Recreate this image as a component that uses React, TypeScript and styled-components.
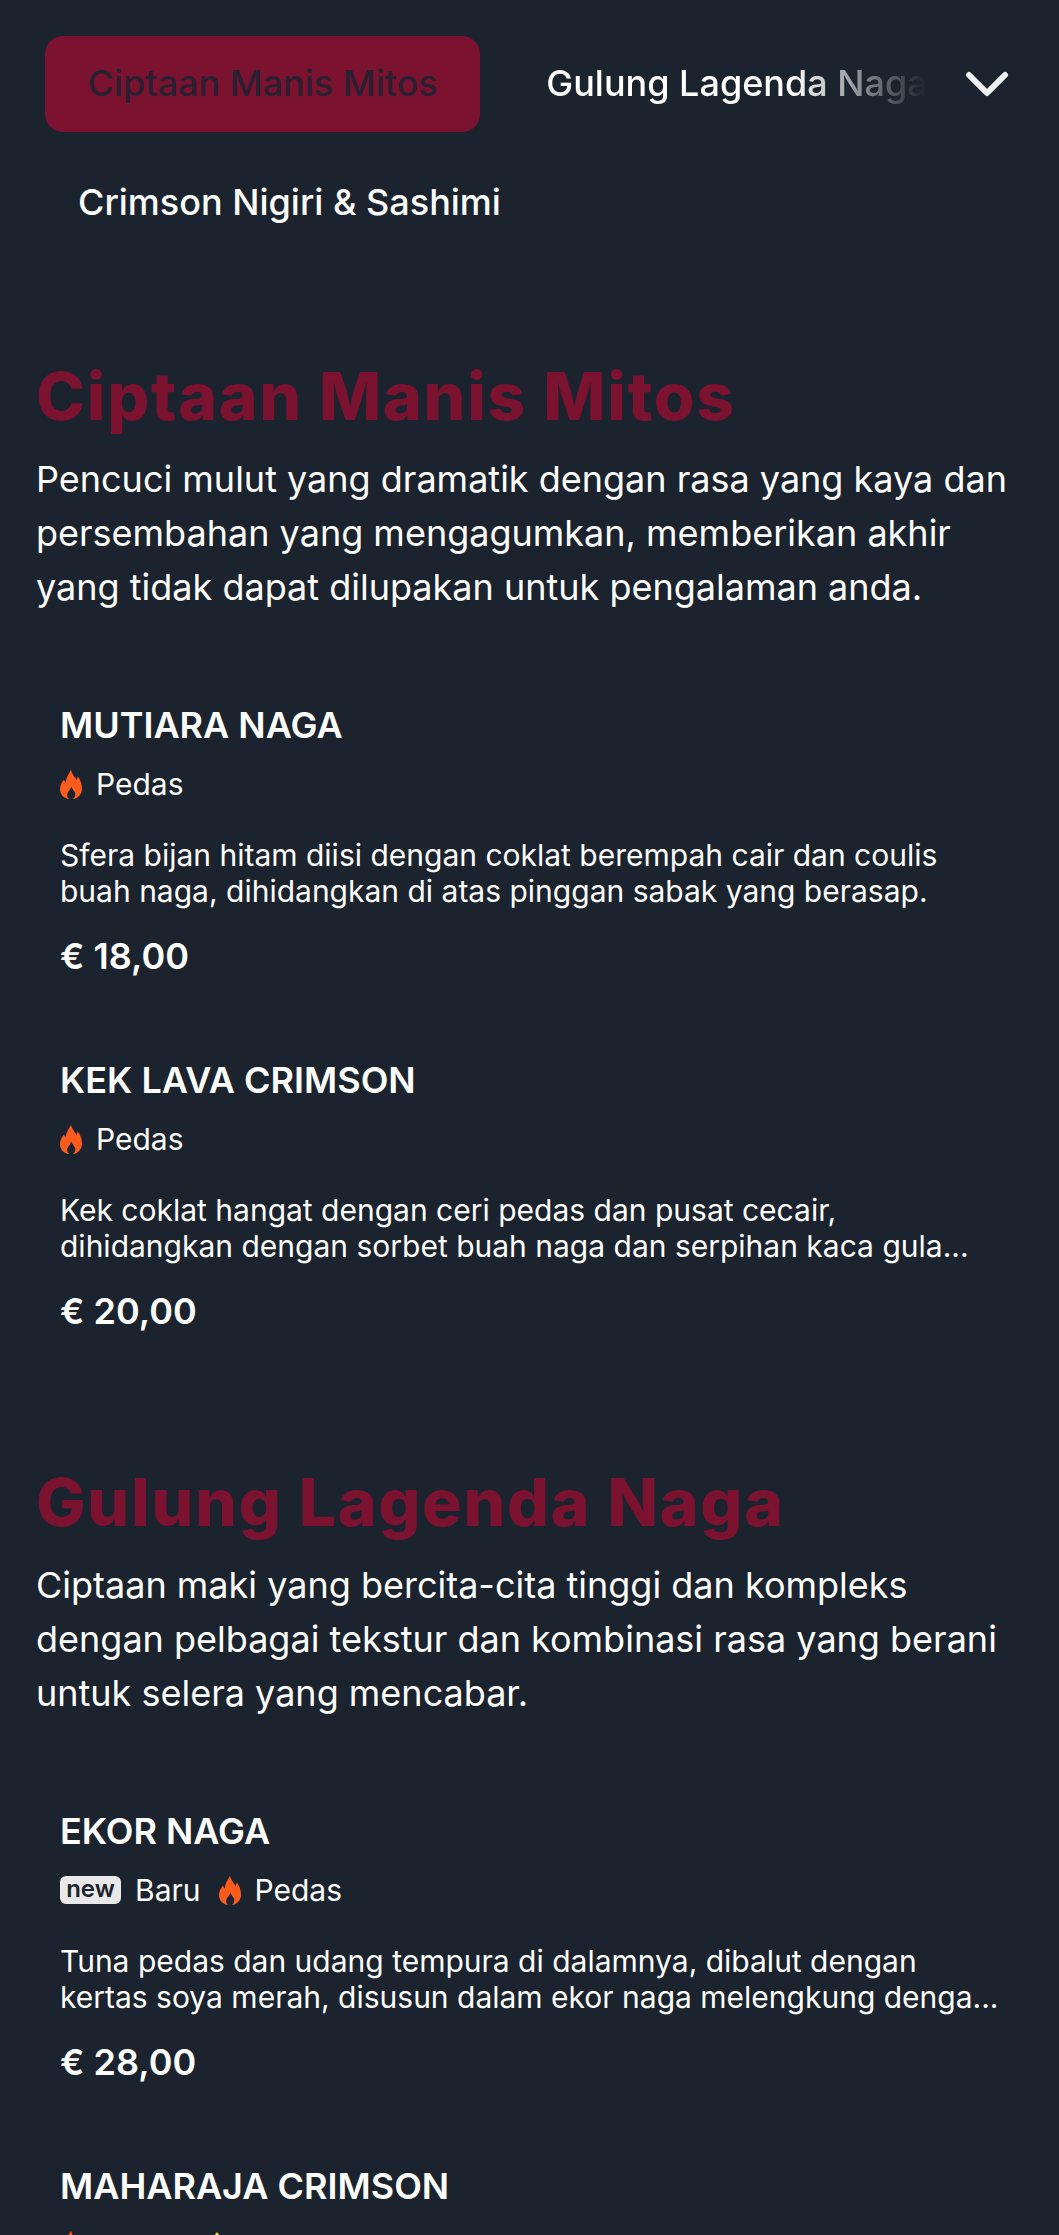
import React from "react";
import styled, { createGlobalStyle } from "styled-components";
import { FaStar } from "react-icons/fa";

const Global = createGlobalStyle`
  html, body { margin: 0; padding: 0; background: #1b232e; }
  body { font-family: Inter, "Liberation Sans", sans-serif; color: #fff; }
`;

const Page = styled.div`
  width: 1059px;
  height: 2235px;
  overflow: hidden;
  background: #1b232e;
`;

const Tabs = styled.nav`
  display: flex;
  align-items: flex-start;
  padding: 36px 50px 0 45px;
  height: 228px;
  box-sizing: border-box;
`;

const TabWrap = styled.div`
  flex: 1;
  display: flex;
  flex-wrap: wrap;
  row-gap: 23px;
  overflow: hidden;
`;

const Tab = styled.button<{ $active?: boolean; $shift?: number }>`
  height: 96px;
  padding: 0 ${(p) => (p.$active ? 42.5 : 0)}px 2px;
  margin-left: ${(p) => p.$shift ?? 0}px;
  border: none;
  border-radius: 18px;
  background: ${(p) => (p.$active ? "#7b1230" : "transparent")};
  color: ${(p) => (p.$active ? "#2a2030" : "#fff")};
  font: 500 36px Inter, sans-serif;
  white-space: nowrap;
`;

const FadeTab = styled.span`
  display: block;
  width: 380px;
  overflow: hidden;
  white-space: nowrap;
  -webkit-mask-image: linear-gradient(90deg, #000 65%, transparent 100%);
  mask-image: linear-gradient(90deg, #000 65%, transparent 100%);
`;

const Chevron = styled.svg`
  width: 44px;
  height: 26px;
  margin-top: 35px;
  flex: none;
  fill: none;
  stroke: #f1f3f5;
  stroke-width: 6;
  stroke-linecap: round;
  stroke-linejoin: round;
`;

const Section = styled.section`
  display: flex;
  flex-direction: column;
  padding: 0 36px;
`;

const Title = styled.h2`
  margin: 128px 0 0;
  font: 800 66px/80px Inter, sans-serif;
  letter-spacing: 1.7px;
  color: #7b1230;
`;

const Lead = styled.p`
  margin: 16px 0 10px;
  font: 400 36px/54px Inter, sans-serif;
`;

const Item = styled.article`
  padding: 0 24px;
  margin-top: 78px;
`;

const Name = styled.h3`
  margin: 0;
  font: 600 36px/46px Inter, sans-serif;
`;

const Tags = styled.div`
  display: flex;
  align-items: center;
  height: 36px;
  margin-top: 18px;
  font: 400 30px/36px Inter, sans-serif;
`;

const Tag = styled.span`
  display: flex;
  align-items: center;
  margin-right: 18px;
`;

const IconGap = styled.span`
  width: 89px;
  margin-right: 18px;
`;

const FlameSvg = styled.svg`
  width: 22px;
  height: 29px;
  fill: #ff5c1c;
  margin-right: 14px;
`;

const Star = styled(FaStar)`
  width: 28px;
  height: 28px;
  color: #e6d23c;
`;

const NewBadge = styled.span`
  width: 61px;
  height: 28px;
  margin-right: 14px;
  border-radius: 6px;
  background: #e9e9e9;
  color: #1b232e;
  font: 600 24px/26px Inter, sans-serif;
  text-align: center;
`;

const Desc = styled.p`
  margin: 35px 0 0;
  font: 400 30px/36px Inter, sans-serif;
`;

const Price = styled.div`
  margin-top: 24px;
  font: 600 36px/46px Inter, sans-serif;
`;

const Flame = () => (
  <FlameSvg viewBox="0 0 220 290">
    <path d="M110 0C118 40 150 70 165 100C172 85 176 75 178 62C205 100 220 140 220 185C220 245 178 285 130 290C150 270 158 250 150 225C140 205 125 195 112 165C105 195 85 210 75 230C65 255 75 275 90 290C40 285 0 245 0 190C0 150 20 120 40 95C45 110 50 118 58 125C60 75 85 40 110 0Z" />
  </FlameSvg>
);

type T = { name: string; isNew?: boolean; clipped?: boolean; desc: string[]; price: string };

const sections: { title: string; lead: string[]; items: T[] }[] = [
  {
    title: "Ciptaan Manis Mitos",
    lead: [
      "Pencuci mulut yang dramatik dengan rasa yang kaya dan",
      "persembahan yang mengagumkan, memberikan akhir",
      "yang tidak dapat dilupakan untuk pengalaman anda.",
    ],
    items: [
      {
        name: "MUTIARA NAGA",
        desc: [
          "Sfera bijan hitam diisi dengan coklat berempah cair dan coulis",
          "buah naga, dihidangkan di atas pinggan sabak yang berasap.",
        ],
        price: "€ 18,00",
      },
      {
        name: "KEK LAVA CRIMSON",
        desc: [
          "Kek coklat hangat dengan ceri pedas dan pusat cecair,",
          "dihidangkan dengan sorbet buah naga dan serpihan kaca gula...",
        ],
        price: "€ 20,00",
      },
    ],
  },
  {
    title: "Gulung Lagenda Naga",
    lead: [
      "Ciptaan maki yang bercita-cita tinggi dan kompleks",
      "dengan pelbagai tekstur dan kombinasi rasa yang berani",
      "untuk selera yang mencabar.",
    ],
    items: [
      {
        name: "EKOR NAGA",
        isNew: true,
        desc: [
          "Tuna pedas dan udang tempura di dalamnya, dibalut dengan",
          "kertas soya merah, disusun dalam ekor naga melengkung denga...",
        ],
        price: "€ 28,00",
      },
      { name: "MAHARAJA CRIMSON", clipped: true, desc: [], price: "" },
    ],
  },
];

export default function App() {
  return (
    <Page>
      <Global />
      <Tabs>
        <TabWrap>
          <Tab $active>Ciptaan Manis Mitos</Tab>
          <Tab $shift={66}>
            <FadeTab>Gulung Lagenda Naga</FadeTab>
          </Tab>
          <Tab $shift={33}>Crimson Nigiri &amp; Sashimi</Tab>
        </TabWrap>
        <Chevron viewBox="0 0 44 26">
          <polyline points="4,4 22,22 40,4" />
        </Chevron>
      </Tabs>
      {sections.map((s) => (
        <Section key={s.title}>
          <Title>{s.title}</Title>
          <Lead>
            {s.lead.map((l) => (
              <React.Fragment key={l}>
                {l}
                <br />
              </React.Fragment>
            ))}
          </Lead>
          {s.items.map((it) => (
            <Item key={it.name}>
              <Name>{it.name}</Name>
              {it.clipped ? (
                <Tags>
                  <Flame />
                  <IconGap />
                  <Star />
                </Tags>
              ) : (
                <>
                  <Tags>
                    {it.isNew && (
                      <Tag>
                        <NewBadge>new</NewBadge>Baru
                      </Tag>
                    )}
                    <Tag>
                      <Flame />
                      Pedas
                    </Tag>
                  </Tags>
                  <Desc>
                    {it.desc.map((d) => (
                      <React.Fragment key={d}>
                        {d}
                        <br />
                      </React.Fragment>
                    ))}
                  </Desc>
                  <Price>{it.price}</Price>
                </>
              )}
            </Item>
          ))}
        </Section>
      ))}
    </Page>
  );
}
